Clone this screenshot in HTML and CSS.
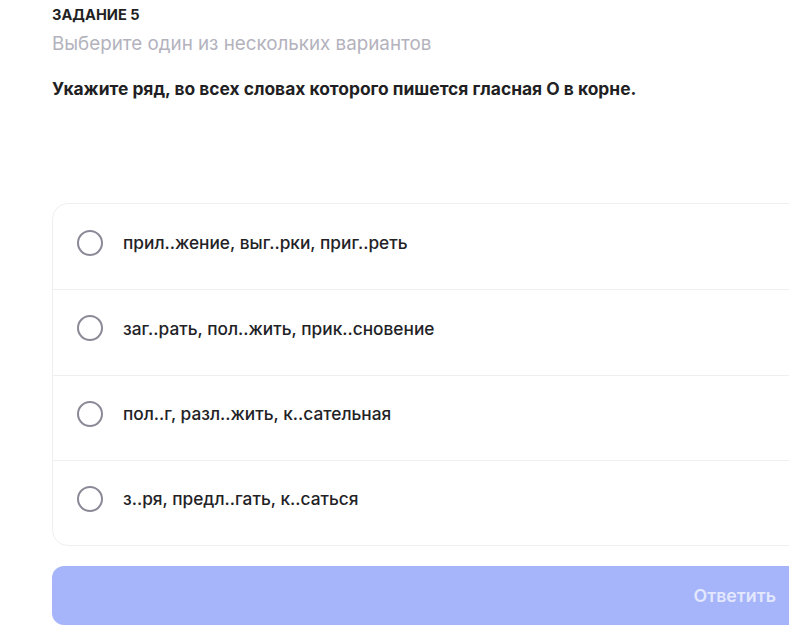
FILE: index.html
```html
<!DOCTYPE html>
<html lang="ru">
  <head>
    <meta charset="UTF-8" />
    <meta name="viewport" content="width=device-width, initial-scale=1.0" />
    <link rel="stylesheet" href="styles.css">
    <title>Задание 5</title>
  </head>
  <body>
    <div class="task">
      <div class="task-label">ЗАДАНИЕ 5</div>
      <div class="task-hint">Выберите один из нескольких вариантов</div>
      <div class="task-question">Укажите ряд, во всех словах которого пишется гласная О в корне.</div>

      <ul class="answers">
        <li class="answer">
          <span class="radio"></span>
          <span>прил..жение, выг..рки, приг..реть</span>
        </li>
        <li class="answer">
          <span class="radio"></span>
          <span>заг..рать, пол..жить, прик..сновение</span>
        </li>
        <li class="answer">
          <span class="radio"></span>
          <span>пол..г, разл..жить, к..сательная</span>
        </li>
        <li class="answer">
          <span class="radio"></span>
          <span>з..ря, предл..гать, к..саться</span>
        </li>
      </ul>

      <button class="submit">Ответить</button>
    </div>
  </body>
</html>
```

FILE: styles.css
```css
* {
  margin: 0;
  padding: 0;
  box-sizing: border-box;
}

body {
  background: #fff;
  font-family: Inter, "Noto Sans", sans-serif;
  color: #1f1f24;
  overflow: hidden;
}

.task {
  width: 760px;
  margin-left: 52px;
  padding-top: 7px;
}

.task-label {
  font-size: 14.6px;
  font-weight: 700;
  line-height: 16px;
}

.task-hint {
  margin-top: 9px;
  font-size: 18.8px;
  line-height: 24px;
  color: #b3b2bd;
}

.task-question {
  margin-top: 22px;
  font-size: 17.4px;
  font-weight: 700;
  line-height: 22px;
}

.answers {
  list-style: none;
  margin-top: 103px;
  border: 1px solid #efefef;
  border-radius: 16px;
}

.answer {
  display: flex;
  align-items: center;
  height: 85.25px;
  padding-left: 24px;
  padding-bottom: 8px;
  font-size: 17.3px;
  font-weight: 500;
  color: #222226;
  border-top: 1px solid #efefef;
}

.answer:first-child {
  border-top: none;
}

.radio {
  width: 26px;
  height: 26px;
  margin-right: 20px;
  border: 2.5px solid #8b8997;
  border-radius: 50%;
  flex-shrink: 0;
}

.submit {
  display: block;
  width: 100%;
  height: 59px;
  margin-top: 20px;
  padding-right: 36px;
  border: none;
  border-radius: 12px;
  background: #a6b4fa;
  color: #e3e8fe;
  font-family: inherit;
  font-size: 17.8px;
  font-weight: 600;
  text-align: right;
}
```
